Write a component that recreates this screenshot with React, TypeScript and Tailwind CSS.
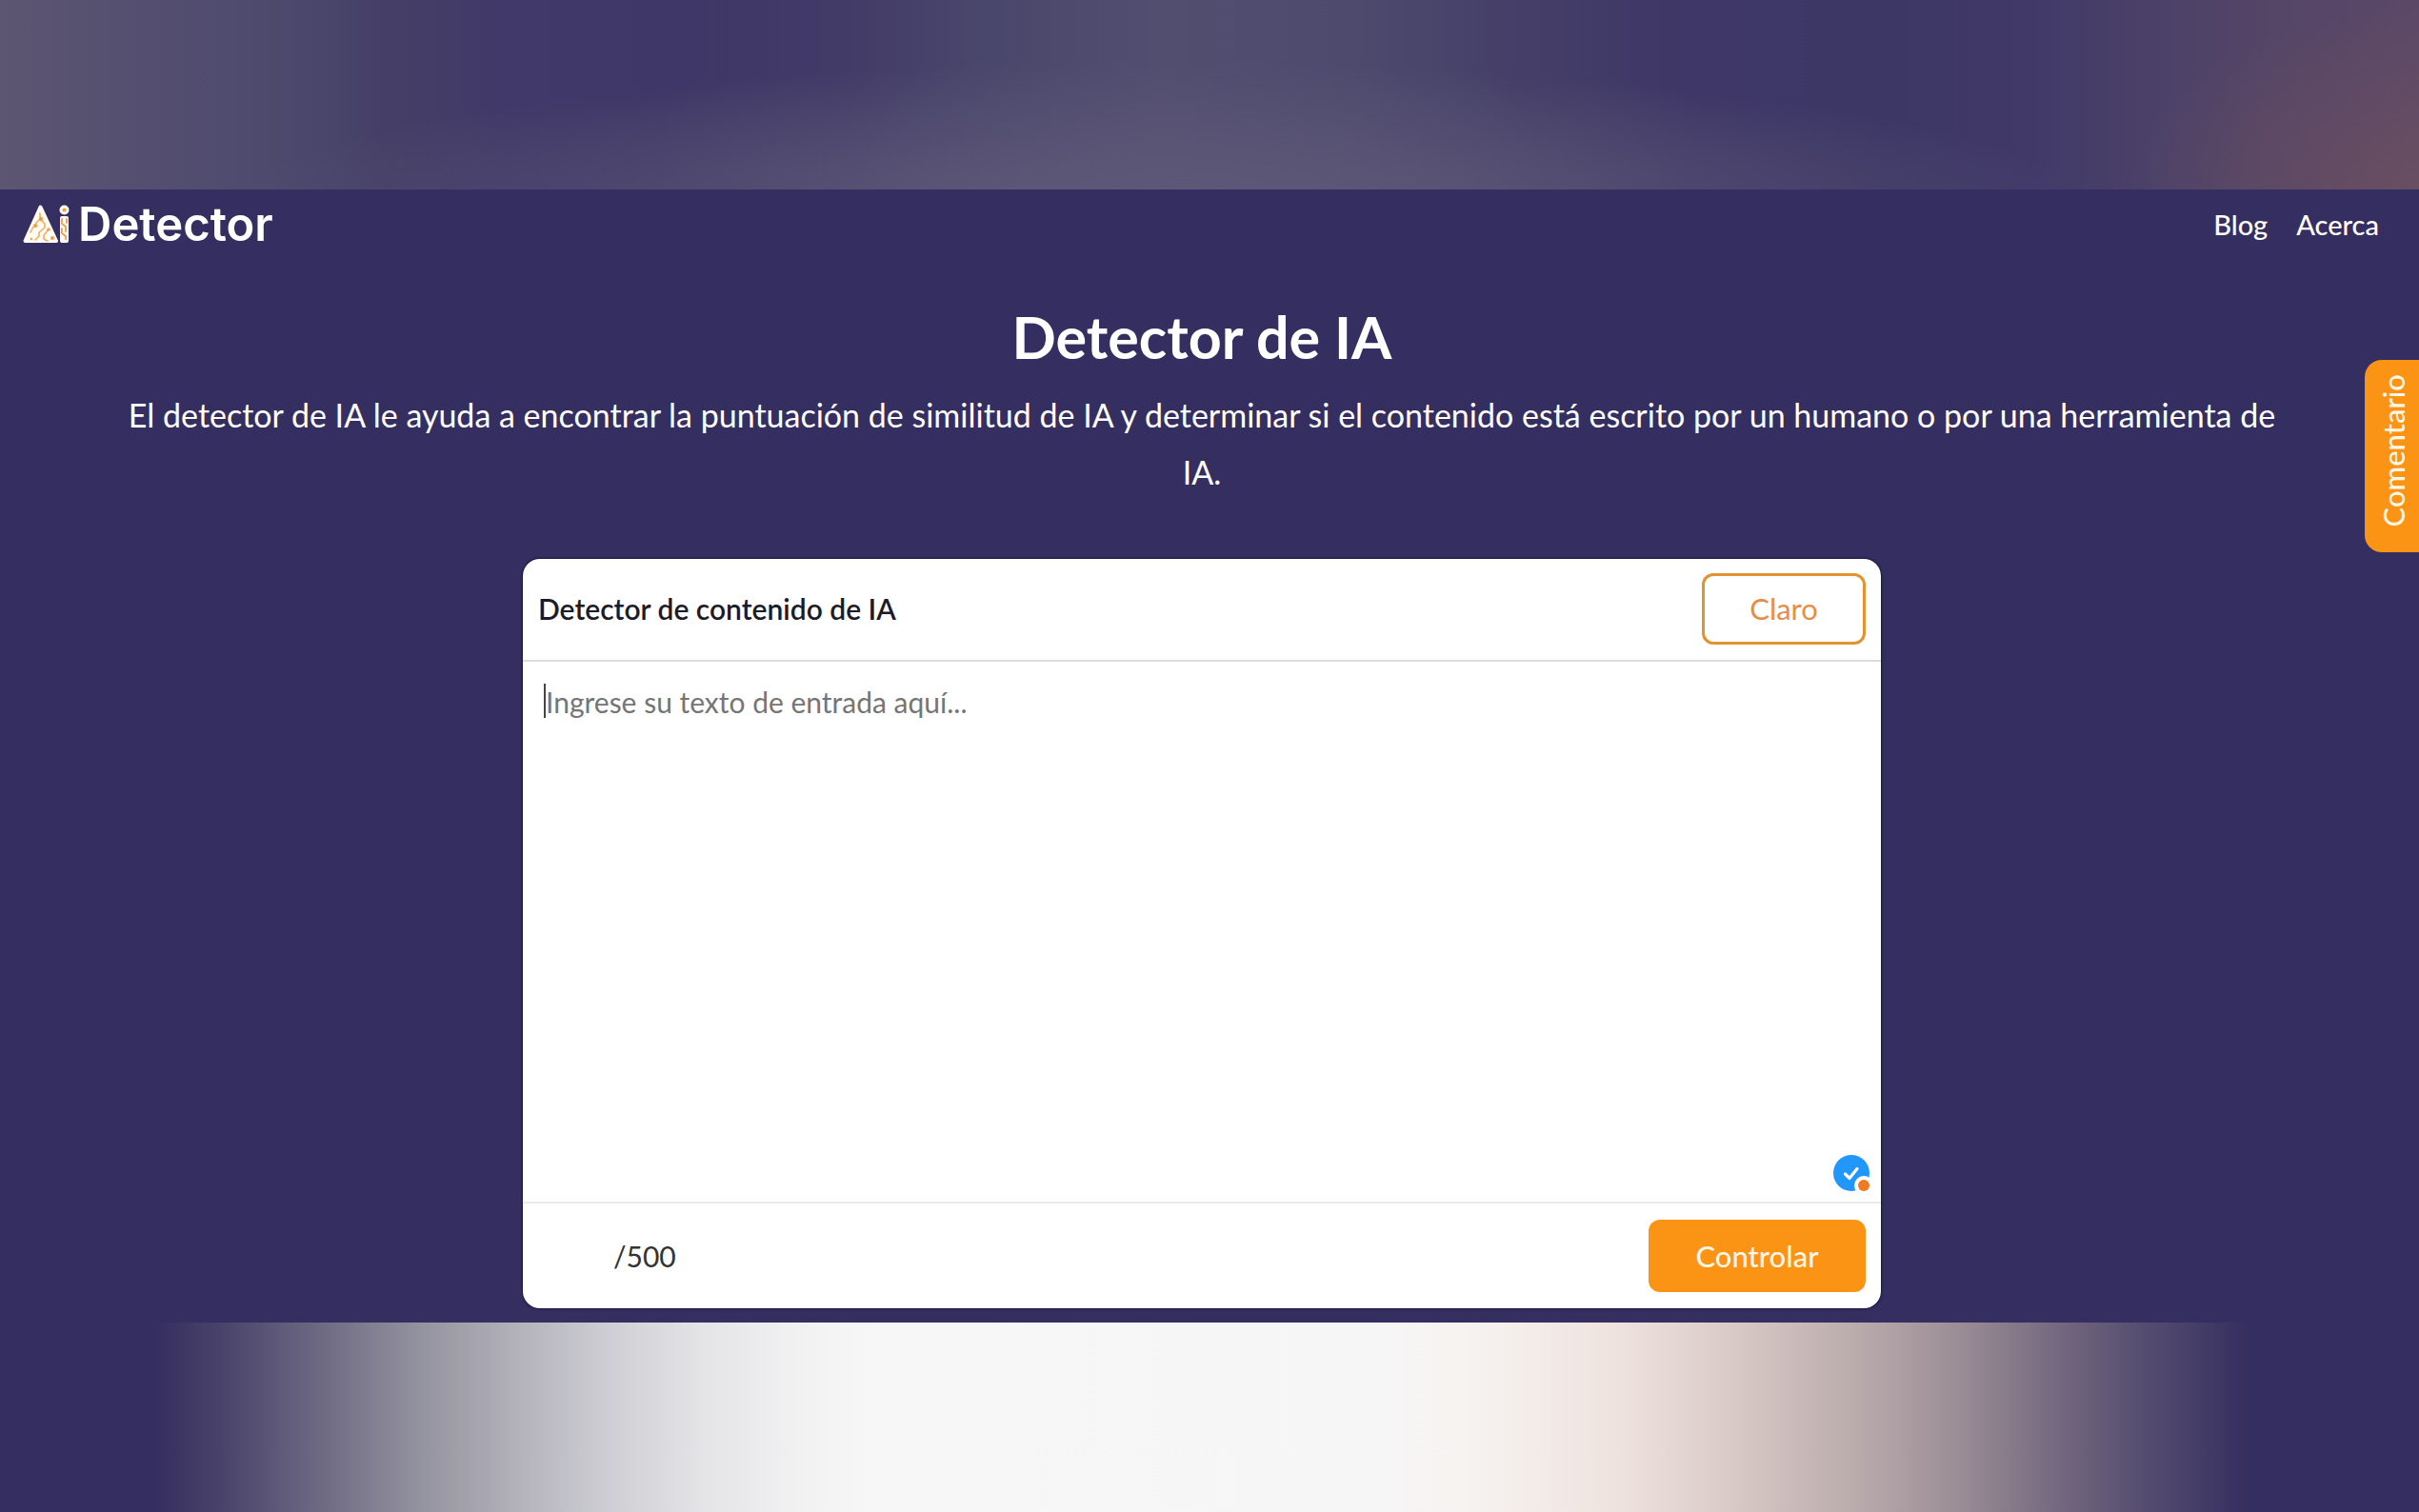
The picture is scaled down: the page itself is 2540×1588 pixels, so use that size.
import { useState } from 'react';

const MAX_WORDS = 500;

function Logo() {
  return (
    <a href="#" className="flex items-center gap-2" aria-label="Ai Detector">
      <svg viewBox="0 0 50 42" className="h-[42px] w-[50px]" aria-hidden="true">
        <path
          d="M18.5 2.5 L35 38 H2.5 Z"
          fill="#fffaf3"
          stroke="#fffaf3"
          strokeWidth="4"
          strokeLinejoin="round"
        />
        <g fill="none" stroke="#f0b060" strokeWidth="1.6" strokeLinecap="round">
          <path d="M18 9v6l-4 4v4" />
          <path d="M20 17l3 3v4l-6 5v4l-4 4" />
          <path d="M27 26l-5 6v4l4 2" />
          <path d="M11 23l-3 6" />
        </g>
        <g fill="#eda048">
          <circle cx="19" cy="15" r="2.2" />
          <circle cx="13" cy="22" r="2" />
          <circle cx="27" cy="26" r="1.8" />
          <circle cx="31" cy="35" r="2" />
          <circle cx="9" cy="36" r="1.3" />
        </g>
        <circle cx="43.5" cy="5.5" r="5" fill="#fffaf3" />
        <circle cx="43.5" cy="5.5" r="2" fill="#eda048" />
        <rect x="39" y="12" width="9" height="28" rx="2" fill="#fffaf3" />
        <g fill="none" stroke="#eda048" strokeWidth="1.8" strokeLinecap="round">
          <path d="M41 15v5l4 3v5" />
          <path d="M46 15v4" />
          <path d="M41 25v5l4 3v3" />
        </g>
      </svg>
      <span className="font-[Inter,sans-serif] text-[49px] font-semibold leading-none text-white">Detector</span>
    </a>
  );
}

function StatusBadge() {
  return (
    <svg viewBox="0 0 38 38" className="size-[38px]" role="img" aria-label="Revisión activa">
      <circle cx="19" cy="19" r="19" fill="#2196fb" />
      <path
        d="M12.5 20l4.500 4.500 8-10"
        fill="none"
        stroke="#fff"
        strokeWidth="3.2"
        strokeLinecap="round"
        strokeLinejoin="round"
      />
      <circle cx="32" cy="32" r="10" fill="#fff" />
      <circle cx="32" cy="32" r="6" fill="#ee7b22" />
    </svg>
  );
}

export default function App() {
  const [text, setText] = useState('');

  return (
    <div className="relative flex min-h-screen flex-col bg-[#352e60] font-[Lato,sans-serif] text-white">
      <div className="h-[199px] bg-[radial-gradient(ellipse_38%_75%_at_48%_108%,#5f5978_0%,#5f597899_45%,#5f597800_100%),radial-gradient(ellipse_14%_100%_at_102%_100%,#6a4f60_0%,#6a4f6000_100%),linear-gradient(90deg,#5c5672_0%,#555070_5%,#4e4a6e_11%,#453f67_16%,#403969_21%,#3e3767_27%,#423b68_35%,#4a476c_41%,#524e70_48%,#4d4a6d_56%,#443e68_63%,#3e3767_70%,#3d3766_78%,#413a69_84%,#4b4168_89%,#554567_94%,#5b4868_100%)]" />

      <header className="flex h-[73px] items-center justify-between pl-6 pr-[42px]">
        <Logo />
        <nav className="flex gap-[30px] text-[29px] font-medium">
          <a href="#blog">Blog</a>
          <a href="#acerca">Acerca</a>
        </nav>
      </header>

      <main className="flex flex-col items-center pr-4">
        <h1 className="mt-[42px] text-[61px] font-bold leading-[80px]">Detector de IA</h1>
        <p className="mt-3 px-[120px] text-center text-[34px] leading-[60px]">
          El detector de IA le ayuda a encontrar la puntuación de similitud de IA y determinar si el contenido está
          escrito por un humano o por una herramienta de IA.
        </p>

        <form
          className="mb-[15px] mt-[61px] w-[56.5%] rounded-[18px] bg-white text-[30px] text-[#333] shadow-[0_0_2px_1px_#1d1540]"
          onSubmit={(e) => e.preventDefault()}
        >
          <div className="flex items-center justify-between border-b-2 border-[#ddd] px-4 pb-4 pt-[15px]">
            <label htmlFor="input-text" className="font-semibold text-[#1c1c28]">
              Detector de contenido de IA
            </label>
            <button
              type="button"
              className="h-[75px] w-[172px] rounded-xl border-[3px] border-[#e29330] text-[31px] text-[#e58e4a]"
              onClick={() => setText('')}
            >
              Claro
            </button>
          </div>

          <div className="relative border-b-2 border-[#eaeaea]">
            <textarea
              id="input-text"
              value={text}
              onChange={(e) => setText(e.target.value)}
              placeholder="Ingrese su texto de entrada aquí..."
              className="peer block h-[567px] w-full resize-none px-6 py-5 leading-[44px] caret-[#333] outline-none placeholder:text-[#757575]"
            />
            {/* resting caret, replaced by the native one on focus */}
            <span className="pointer-events-none absolute left-[22px] top-[23px] h-9 w-0.5 bg-[#444] peer-focus:hidden" />
            <div className="absolute bottom-[11px] right-3">
              <StatusBadge />
            </div>
          </div>

          <div className="flex items-center justify-between py-[17px] pl-[95px] pr-4">
            <span>/{MAX_WORDS}</span>
            <button
              type="submit"
              className="h-[76px] w-[228px] rounded-xl bg-[#fb9315] text-[31px] font-medium text-[#fff6e6]"
            >
              Controlar
            </button>
          </div>
        </form>
      </main>

      <div className="min-h-[199px] flex-1 bg-[linear-gradient(90deg,#352e60_6.5%,#4c466c_9.5%,#706c84_13.5%,#908f9c_17%,#b0afb8_21%,#cdcdd3_25%,#e4e4e7_29%,#f1f1f2_33%,#f7f7f7_36%,#f7f6f6_57%,#f6f2f0_61%,#eee2de_67%,#dccdca_71%,#bfb0b0_76%,#9a8d95_81%,#756980_85%,#564e70_88.5%,#352e60_93%)]" />

      <button
        type="button"
        className="absolute right-0 top-[378px] flex h-[202px] w-[57px] items-center justify-center rounded-l-[18px] bg-[#fb9315] pb-3 pl-1 text-[31px] font-medium text-[#fff6e6]"
      >
        <span className="rotate-180 [writing-mode:vertical-rl]">Comentario</span>
      </button>
    </div>
  );
}
